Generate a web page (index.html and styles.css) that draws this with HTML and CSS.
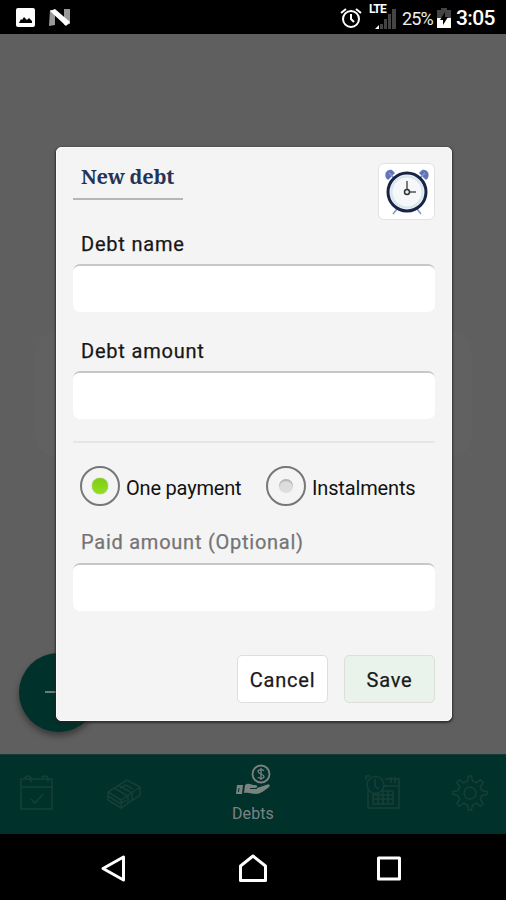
FILE: index.html
```html
<!DOCTYPE html>
<html lang="en">
<head>
<meta charset="utf-8">
<title>New debt</title>
<link rel="stylesheet" href="styles.css">
</head>
<body>
<div class="screen">
  <header class="status">
    <svg class="status-left" width="80" height="34" viewBox="0 0 80 34">
      <path fill="#fff" fill-rule="evenodd" d="M18 8h15a2 2 0 0 1 2 2v15a2 2 0 0 1-2 2H18a2 2 0 0 1-2-2V10a2 2 0 0 1 2-2zM19 23h13v-2l-3-3-2 2-3-3-2 3-1-1z"/>
      <path fill="#999" d="M50 10h5v15l-6 1zM64 9h6v15l-6 1z"/>
      <path fill="#fff" d="M50 11l5-2 15 13-4 4z"/>
    </svg>
    <svg class="alarm" width="22" height="24" viewBox="0 0 22 24">
      <g fill="none" stroke="#fff" stroke-width="2"><circle cx="11" cy="13" r="8"/><path d="M11 8v5l3 3M1 7l5-4M21 7l-5-4"/></g>
    </svg>
    <div class="signal">
      <span class="lte">LTE</span>
      <svg width="22" height="20" viewBox="0 0 22 20"><path fill="#fff" d="M0 20l4-4v4z"/><path fill="#444" d="M5 15h3v5H5zM9 10h3v10H9zM13 5h3v15h-3zM17 0h4v20h-4z"/></svg>
    </div>
    <span class="percent">25%</span>
    <svg class="battery" width="14" height="20" viewBox="0 0 14 20"><path fill="#444" d="M4 0h6v2h4v9H0V2h4z"/><path fill="#fff" d="M0 10h14v10H0z"/><path fill="#000" d="M8 4L3 12h3v5l5-8H8z"/></svg>
    <span class="time">3:05</span>
  </header>

  <main class="content">
    <div class="ghost"></div>
    <div class="fab"></div>
    <form class="dialog">
      <div class="head">
        <h1>New debt</h1>
        <div class="clock">
          <svg width="56" height="56" viewBox="0 0 56 56">
            <path fill="#6076bb" d="M7 14c-2-5 1-9 6-8l3 3-7 7zM49 14c2-5-1-9-6-8l-3 3 7 7z"/>
            <path d="M10 9l6 6M46 9l-6 6M18 45l-4 5M38 45l4 5" stroke="#8796c8" stroke-width="1.600"/>
            <circle cx="28" cy="28" r="19" fill="#edf3f6" stroke="#182446" stroke-width="3"/>
            <circle cx="28" cy="28" r="15.500" fill="#f5f7f8" stroke="#d8e5ed" stroke-width="2"/>
            <path d="M28 17v9M31 28h6" stroke="#555" stroke-width="1.500"/><circle cx="28" cy="28" r="2.500" fill="#eee" stroke="#333" stroke-width="1.500"/>
          </svg>
        </div>
      </div>
      <label class="label name">Debt name</label>
      <div class="field"></div>
      <label class="label amount">Debt amount</label>
      <div class="field"></div>
      <div class="rule"></div>
      <div class="options">
        <div class="option"><span class="radio on"><i></i></span><span class="one">One payment</span></div>
        <div class="option"><span class="radio"><i></i></span><span class="many">Instalments</span></div>
      </div>
      <label class="label paid">Paid amount (Optional)</label>
      <div class="field"></div>
      <div class="actions"><button type="button" class="cancel">Cancel</button><button type="button" class="save">Save</button></div>
    </form>
  </main>

  <nav class="tabs">
    <div class="tab"><svg width="34" height="36" viewBox="0 0 34 36"><g class="faint"><path d="M1 4h31v30H1zM1 12h31M11 24l4 4 8-9"/><path d="M5 4a3 3 0 0 1 6 0v3M22 4a3 3 0 0 1 6 0v3"/></g></svg></div>
    <div class="tab second"><svg width="36" height="34" viewBox="0 0 36 34"><g class="faint"><path d="M2 15L21 3l13 7v8L15 31 2 23zM2 15l13 8 19-13M15 23v8M2 19l13 8 5-4M8 11l14 8v7M12 8l14 8v7M14 11l6-3 7 4"/></g></svg></div>
    <div class="tab active">
      <svg width="36" height="32" viewBox="0 0 36 32"><circle cx="26" cy="10" r="8.500" fill="none" stroke="#7b8381" stroke-width="1.800"/><path d="M29 7c-1-2-6-2-6 .5s6 2.500 6 5-5 2.500-6 .5M26 4v12" fill="none" stroke="#7b8381" stroke-width="1.300"/><path d="M2 21h6l-1 9H1zM10 21c4-3 6 0 10 0 3 0 3 3 0 3h-4 6l9-3c3-1 5 0 3 2-5 4-9 7-13 7-4 0-7-2-12-1z" fill="#7b8381"/><path d="M4 24l-.5 4M15 24.500h7" stroke="#01312b"/></svg>
      <span>Debts</span>
    </div>
    <div class="tab"><svg width="36" height="36" viewBox="0 0 36 36"><g class="faint"><path d="M3 16v17h31V4H20M18 11h16M26 2v6M30 2v6"/><circle cx="10.500" cy="10" r="8.500"/><path d="M10 4v7l4 3M1 5V1h4M8 20h20v9H8zM13 20v9M18 16v13M23 16v13M28 16v13M18 16h10M8 24h20"/></g></svg></div>
    <div class="tab"><svg width="36" height="36" viewBox="0 0 36 36"><g class="faint"><path d="M15.500 6l1-5h3l1 5 4 1.800 4-3 2.700 2.700-3 4 1.800 4 5 1v3l-5 1-1.800 4 3 4-2.700 2.700-4-3-4 1.800-1 5h-3l-1-5-4-1.800-4 3-2.700-2.700 3-4-1.800-4-5-1v-3l5-1 1.800-4-3-4 2.700-2.700 4 3z"/><circle cx="18" cy="18" r="6"/></g></svg></div>
  </nav>
  <footer class="system">
    <svg width="28" height="30" viewBox="0 0 28 30"><path d="M24.500 3v23L4 14.500z"/></svg>
    <svg class="home" width="30" height="30" viewBox="0 0 30 30"><path d="M2.500 26.500V12L15 2l12.500 10v14.500z"/></svg>
    <svg width="28" height="28" viewBox="0 0 28 28"><path d="M3.500 3h21v21h-21z"/></svg>
  </footer>
</div>
</body>
</html>
```

FILE: styles.css
```css
* { box-sizing: border-box; }
body { margin: 0; font-family: Roboto, sans-serif; }
.screen { width: 506px; height: 900px; display: grid; grid-template-rows: 34px 720px 80px 66px; background: #5f5f5f; overflow: hidden; }
svg { display: block; flex: none; }
.status { background: #000; color: #fff; display: flex; align-items: center; }
.alarm { margin: 1px 0 0 260px; }
.signal { position: relative; width: 30px; height: 30px; margin-left: 6px; }
.signal svg { margin: 7px 0 0 7px; }
.lte { position: absolute; left: 1px; top: 1px; font-size: 12px; line-height: 12px; font-weight: 700; letter-spacing: -.8px; background: #000; padding-right: 1px; }
.percent { font-size: 18px; margin: 2px 0 0 4px; width: 34px; letter-spacing: -.9px; color: #eee; }
.battery { margin: 2px 0 0 1px; }
.time { margin: 2px 0 0 5px; font-size: 21px; font-weight: 500; letter-spacing: -.6px; }
.content { position: relative; display: flex; justify-content: center; align-items: flex-start; padding: 113px 0 0 2px; }
.ghost { position: absolute; left: 35px; top: 298px; width: 437px; height: 124px; border-radius: 20px; background: #616161; }
.fab { position: absolute; left: 19px; top: 619px; width: 79px; height: 79px; border-radius: 50%; background: #01312b; box-shadow: 0 4px 6px #0006; }
.fab::after { content: ""; position: absolute; left: 26px; top: 38px; width: 27px; height: 2px; background: #6c7c79; }
.dialog { position: relative; width: 396px; height: 574px; padding: 17px 16px; background: #f4f4f4; border-radius: 5px; border: 1px solid #fafafa; box-shadow: 0 1px 2px 1px #222b; display: flex; flex-direction: column; }
.head { display: flex; justify-content: space-between; height: 56px; margin-top: -2px; }
h1 { margin: 0; width: 110px; height: 37px; border-bottom: 2px solid #b1b6ba; padding: 0 0 0 8px; color: #253456; font: 700 20px/28px "Noto Serif", "DejaVu Serif", serif; letter-spacing: -.25px; white-space: nowrap; }
.clock { width: 57px; height: 57px; border: 1px solid #e2e2e2; border-radius: 6px; background: #fff; }
.label { padding-left: 8px; font-size: 20px; line-height: 24px; height: 24px; color: #171717; white-space: nowrap; -webkit-text-stroke: .25px currentColor; }
.name { margin-top: 13px; letter-spacing: .8px; }
.amount { margin-top: 27px; letter-spacing: .8px; }
.paid { margin-top: 24px; color: #747474; letter-spacing: .75px; }
.field { height: 48px; flex: none; margin-top: 8px; background: #fff; border-radius: 7px; border-top: 2px solid #c5c8c8; }
.paid + .field { margin-top: 9px; }
.rule { height: 2px; flex: none; margin-top: 22px; background: #e6e6e6; }
.options { display: flex; margin: 22px 0 0 7px; height: 41px; }
.option { display: flex; align-items: center; width: 186px; flex: none; font-size: 20px; line-height: 24px; color: #111; white-space: nowrap; }
.option span:last-child { padding: 5px 0 0 6px; }
.one { letter-spacing: -.2px; }
.many { letter-spacing: -.15px; }
.radio { width: 40px; height: 40px; flex: none; border: 2px solid #777; border-radius: 50%; display: grid; place-items: center; }
.radio i { width: 14px; height: 14px; border-radius: 50%; background: #ddd; box-shadow: inset 0 2px 1px #b5b5b5; }
.radio.on i { width: 16px; height: 16px; background: linear-gradient(#7ecb19, #93df20); box-shadow: 0 0 1px #538c15; }
.actions { margin-top: auto; display: flex; justify-content: flex-end; gap: 16px; }
button { width: 91px; height: 48px; padding: 1px 0 0; font: 20px/24px Roboto, sans-serif; color: #191919; border: 1px solid #dededa; border-radius: 5px; background: #fff; letter-spacing: .8px; -webkit-text-stroke: .25px currentColor; }
.save { background: #e9f3eb; }
.tabs { background: #01312b; display: grid; grid-template-columns: 74px 100px 158px 102px 72px; border-top: 1px solid #153b36; }
.tab { display: flex; flex-direction: column; align-items: center; padding-top: 20px; }
.second { padding-top: 22px; }
.active { padding-top: 9px; color: #7b8381; font-size: 16px; line-height: 19px; }
.active span { margin-top: 8px; letter-spacing: .1px; }
.faint { fill: none; stroke: #173f37; stroke-width: 1.500; }
.system { background: #000; display: flex; align-items: center; justify-content: space-between; padding: 4px 103px 0 99px; }
.system path { fill: none; stroke: #fff; stroke-width: 3; stroke-linejoin: round; }
.home { margin-left: 3px; }
```
